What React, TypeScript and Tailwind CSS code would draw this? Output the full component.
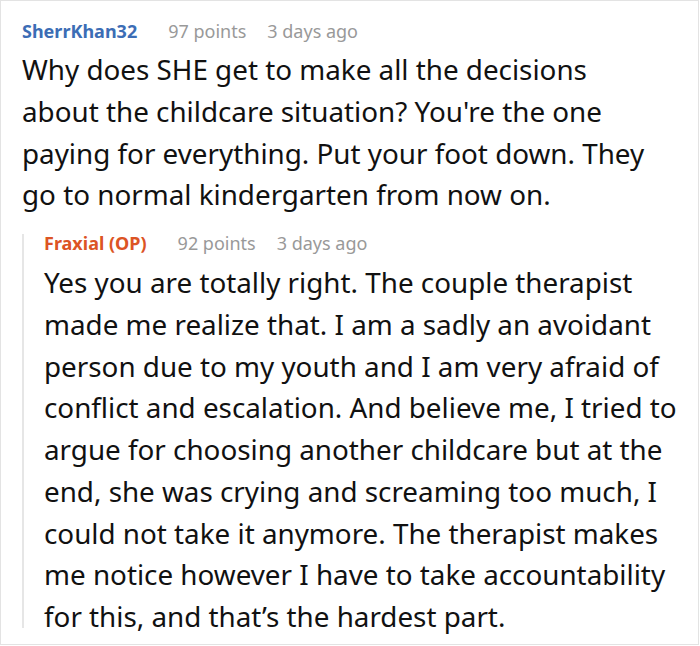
export default function App() {
  return (
    <div className="h-[646px] w-[700px] bg-white" style={{ fontFamily: '"Noto Sans", sans-serif' }}>
      <div className="h-[645px] w-[699px] border border-[#e3e3e3] pl-[21px] pt-[17px]">
        <div className="flex items-baseline text-[18px] leading-[26px]">
          <span className="font-bold text-[#3c6db5]">SherrKhan32</span>
          <span className="ml-[31px] text-[#999]">97 points</span>
          <span className="ml-[21px] text-[#999]">3 days ago</span>
        </div>
        <p className="mt-[5px] w-[638px] text-[27.8px] leading-[41.75px] text-[#111]">
          Why does SHE get to make all the decisions about the childcare situation? You're the one paying for
          everything. Put your foot down. They go to normal kindergarten from now on.
        </p>
        <div className="mt-[14px] flex">
          <div className="mb-[10px] mt-[4px] w-[2px] self-stretch bg-[#e6e6e6]" />
          <div className="pl-[20px]">
            <div className="flex items-baseline text-[18px] leading-[26px]">
              <span className="font-bold text-[#dc5424]">Fraxial (OP)</span>
              <span className="ml-[31px] text-[#999]">92 points</span>
              <span className="ml-[21px] text-[#999]">3 days ago</span>
            </div>
            <p className="mt-[6px] w-[650px] text-[27.8px] leading-[41.75px] text-[#111]">
              Yes you are totally right. The couple therapist made me realize that. I am a sadly an avoidant person due
              to my youth and I am very afraid of conflict and escalation. And believe me, I tried to argue for
              choosing another childcare but at the end, she was crying and screaming too much, I could not take it
              anymore. The therapist makes me notice however I have to take accountability for this, and that’s the
              hardest part.
            </p>
          </div>
        </div>
      </div>
    </div>
  );
}
